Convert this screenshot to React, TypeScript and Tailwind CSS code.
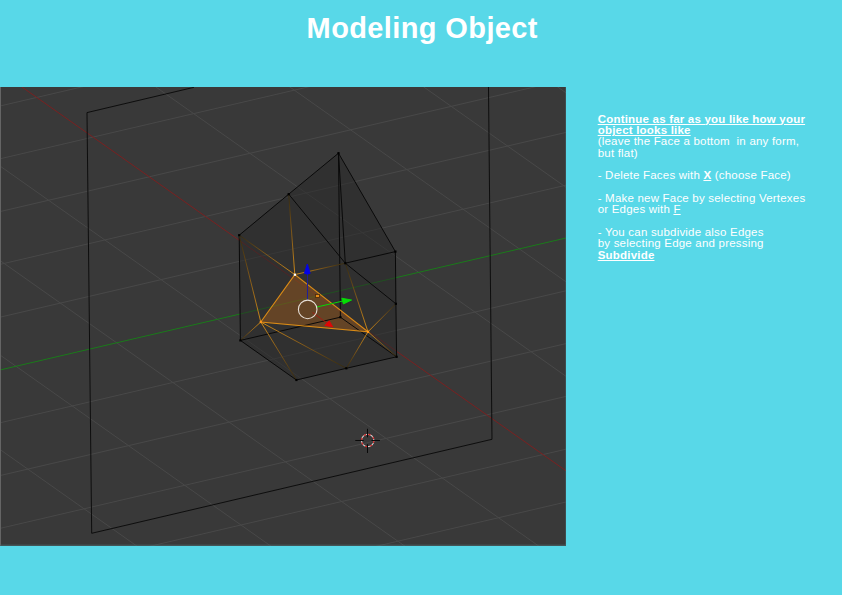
import type { ReactNode } from "react";

type Point = [number, number];
type Segment = [Point, Point];

const vertices: Record<string, Point> = {
  A: [338.5, 153.2],
  B: [288.7, 194.2],
  C: [239.2, 235.2],
  D: [345.3, 263.2],
  E: [395.4, 251.6],
  F: [395.9, 303.8],
  G: [396.6, 356.8],
  H: [346.3, 368.3],
  I: [296.4, 380],
  J: [240.4, 340.4],
  K: [340.4, 317.2],
  P: [294.8, 274.6],
  Q: [260.8, 322],
  R: [368, 331.8],
};

const blackEdges = ["AB", "BC", "AD", "AK", "AE", "BD", "DE", "EF", "FG", "DF", "CJ", "JK", "KG", "JI", "IH", "HG"];

// Each edge runs from a selected vertex to a neighbour and fades on the way.
const fadingEdges = ["PB", "PC", "PD", "QC", "QJ", "QI", "QH", "RD", "RF", "RG", "RH"];

const risingGrid: Segment[] = [-6, -5, -4, -3, -2, -1, 1, 2, 3, 4, 5].map((k) => [
  [0, 370 + k * 52.8],
  [566, 238 + k * 52.8],
]);

const fallingGrid: Segment[] = [-4, -3, -2, -1, 1, 2, 3, 4].map((k) => [
  [0, 71.5 + k * 94.5],
  [566, 470.8 + k * 94.5],
]);

function Line({ from, to, stroke, width = 1, opacity = 1 }: { from: Point; to: Point; stroke: string; width?: number; opacity?: number }) {
  return (
    <line x1={from[0]} y1={from[1]} x2={to[0]} y2={to[1]} stroke={stroke} strokeWidth={width} opacity={opacity} />
  );
}

function Viewport() {
  return (
    <svg className="block h-[458.5px] w-[566.4px] bg-[#393939]" viewBox="0 87 566.4 458.5">
      <defs>
        {fadingEdges.map((edge) => {
          const [a, b] = [vertices[edge[0]], vertices[edge[1]]];
          return (
            <linearGradient key={edge} id={edge} gradientUnits="userSpaceOnUse" x1={a[0]} y1={a[1]} x2={b[0]} y2={b[1]}>
              <stop offset="0" stopColor="#cf8a18" />
              <stop offset="0.5" stopColor="#80581a" />
              <stop offset="1" stopColor="#33290f" />
            </linearGradient>
          );
        })}
      </defs>

      {[...risingGrid, ...fallingGrid].map(([from, to], i) => (
        <Line key={i} from={from} to={to} stroke="#484848" />
      ))}
      <Line from={[0, 71.5]} to={[566, 470.8]} stroke="#7a2020" />
      <Line from={[0, 370]} to={[566, 238]} stroke="#1a7a1a" />

      <path d="M338.5 153.2L395.4 251.6L396.6 356.8L296.4 380L240.4 340.4L239.2 235.2Z" fill="#292929" opacity="0.52" />
      <path d="M194 87.3L87 112.6L91.7 533.3L492 439.3L488.5 87" fill="none" stroke="#0d0d0d" />
      <path d="M294.8 274.6L260.8 322L368 331.8Z" fill="#b5641a" fillOpacity="0.4" />

      {blackEdges.map((edge) => (
        <Line key={edge} from={vertices[edge[0]]} to={vertices[edge[1]]} stroke="#090909" />
      ))}
      {fadingEdges.map((edge) => (
        <Line key={edge} from={vertices[edge[0]]} to={vertices[edge[1]]} stroke={`url(#${edge})`} />
      ))}
      <path d="M294.8 274.6L260.8 322L368 331.8Z" fill="none" stroke="#d88a16" strokeWidth="1.1" />

      {"ABCDEFGHIJK".split("").map((name) => (
        <rect key={name} x={vertices[name][0] - 1.1} y={vertices[name][1] - 1.1} width="2.2" height="2.2" fill="#000" />
      ))}
      <rect x="293.8" y="273.6" width="2.2" height="2.2" fill="#fff" />
      <rect x="259.7" y="320.9" width="2.2" height="2.2" fill="#ff981c" />
      <rect x="366.9" y="330.7" width="2.2" height="2.2" fill="#ff981c" />
      <rect x="315.6" y="294.4" width="3.8" height="3" fill="#e58a17" stroke="#4a2a0b" strokeWidth="0.8" />

      <Line from={[307.5, 300]} to={[307.5, 272]} stroke="#20209a" />
      <path d="M307.3 264L310.2 273.3Q307.3 275 304.4 273.3Z" fill="#0404e6" stroke="#0404e6" strokeWidth="0.9" />
      <Line from={[317, 307]} to={[343, 301]} stroke="#05d805" />
      <path d="M351.6 300L341.8 298.2L343.4 304Z" fill="#04df04" stroke="#04df04" strokeWidth="0.9" />
      <Line from={[312.5, 312.5]} to={[327, 323]} stroke="#a21b12" />
      <path d="M332.8 327L329.2 320.8L324.8 325.4Z" fill="#df0606" stroke="#df0606" strokeWidth="0.9" />
      <circle cx="307.7" cy="309.4" r="9.3" fill="none" stroke="#e7dfd7" strokeWidth="1.1" />

      <circle cx="367.7" cy="440.5" r="6.2" fill="none" stroke="#d9d9d9" strokeWidth="1.1" />
      <circle cx="367.7" cy="440.5" r="6.2" fill="none" stroke="#d21919" strokeWidth="1.1" strokeDasharray="2.43" />
      <path d="M355.3 440.5H363.7M371.5 440.5H380M367.5 428.8V437.3M367.5 444.3V453" stroke="#090909" />

      <path d="M0.5 87V545.5" stroke="#666666" />
      <path d="M0 545.2H566V87" fill="none" stroke="#527478" strokeWidth="0.7" />
    </svg>
  );
}

function Mark({ children }: { children: ReactNode }) {
  return <b className="underline decoration-[1px] underline-offset-[1px]">{children}</b>;
}

export default function App() {
  return (
    <main className="flex h-[595px] w-[842px] flex-col overflow-hidden bg-[#58d8e8] font-['Liberation_Sans',Arial,sans-serif] text-white">
      <header className="flex h-[87px] shrink-0 justify-center pt-[12px] pl-[2.5px]">
        <h1 className="text-[29px] leading-[32px] font-bold tracking-[0.38px]">Modeling Object</h1>
      </header>
      <div className="flex items-start">
        <Viewport />
        <div className="pt-[26.5px] pl-[31.3px] text-[11.5px] leading-[11.35px] tracking-[0.205px] whitespace-pre">
          <p>
            <Mark>Continue as far as you like how your</Mark>
            <br />
            <Mark>object looks like</Mark>
            <br />
            {"(leave the Face a bottom  in any form,"}
            <br />
            but flat)
          </p>
          <p className="mt-[11.35px]">
            - Delete Faces with <Mark>X</Mark> (choose Face)
          </p>
          <p className="mt-[11.35px]">
            - Make new Face by selecting Vertexes
            <br />
            or Edges with <span className="underline decoration-[1px] underline-offset-[1px]">F</span>
          </p>
          <p className="mt-[11.35px]">
            - You can subdivide also Edges
            <br />
            by selecting Edge and pressing
            <br />
            <Mark>Subdivide</Mark>
          </p>
        </div>
      </div>
    </main>
  );
}
